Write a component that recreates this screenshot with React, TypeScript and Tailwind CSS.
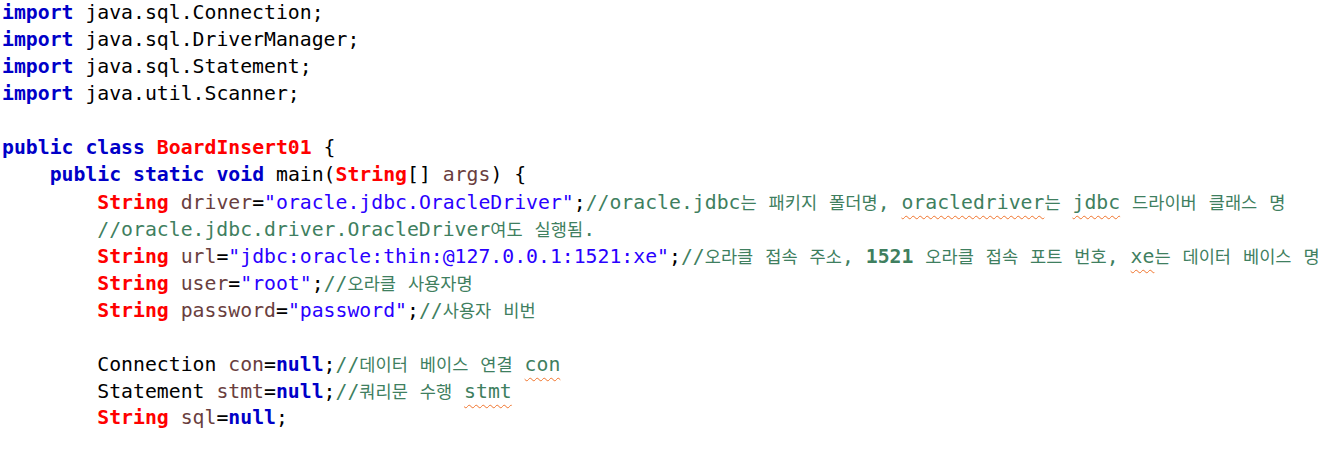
import { Fragment } from 'react';

type Kind = 'kw' | 'type' | 'str' | 'var' | 'cm' | 'cmb' | 'sq' | 'txt';
type Token = [Kind, string];

const COLORS: Record<Kind, string> = {
  kw: 'text-[#0000c8] font-bold',
  type: 'text-[#ff0000] font-bold',
  str: 'text-[#2a00ff]',
  var: 'text-[#6a3e3e]',
  cm: 'text-[#3f7f5f]',
  cmb: 'text-[#3f7f5f] font-bold',
  sq: 'text-[#3f7f5f] underline decoration-wavy decoration-[#f0742c] decoration-1 underline-offset-[6px]',
  txt: 'text-black',
};

const HANGUL = /([\uac00-\ud7a3]+)/;

// hangul falls back to a narrower font in the editor, so size it on its own
const Segment = ({ text }: { text: string }) => (
  <>
    {text.split(HANGUL).map((part, i) =>
      HANGUL.test(part) ? (
        <span key={i} className="text-[17.6px] font-normal" style={{ fontFamily: '"Noto Sans CJK KR", sans-serif' }}>
          {part}
        </span>
      ) : (
        <Fragment key={i}>{part}</Fragment>
      ),
    )}
  </>
);

const LINES: { indent: number; tokens: Token[] }[] = [
  { indent: 0, tokens: [['kw', 'import'], ['txt', ' java.sql.Connection;']] },
  { indent: 0, tokens: [['kw', 'import'], ['txt', ' java.sql.DriverManager;']] },
  { indent: 0, tokens: [['kw', 'import'], ['txt', ' java.sql.Statement;']] },
  { indent: 0, tokens: [['kw', 'import'], ['txt', ' java.util.Scanner;']] },
  { indent: 0, tokens: [] },
  { indent: 0, tokens: [['kw', 'public'], ['txt', ' '], ['kw', 'class'], ['txt', ' '], ['type', 'BoardInsert01'], ['txt', ' {']] },
  {
    indent: 1,
    tokens: [
      ['kw', 'public'],
      ['txt', ' '],
      ['kw', 'static'],
      ['txt', ' '],
      ['kw', 'void'],
      ['txt', ' main('],
      ['type', 'String'],
      ['txt', '[] '],
      ['var', 'args'],
      ['txt', ') {'],
    ],
  },
  {
    indent: 2,
    tokens: [
      ['type', 'String'],
      ['txt', ' '],
      ['var', 'driver'],
      ['txt', '='],
      ['str', '"oracle.jdbc.OracleDriver"'],
      ['txt', ';'],
      ['cm', '//oracle.jdbc는 패키지 폴더명, '],
      ['sq', 'oracledriver'],
      ['cm', '는 '],
      ['sq', 'jdbc'],
      ['cm', ' 드라이버 클래스 명'],
    ],
  },
  { indent: 2, tokens: [['cm', '//oracle.jdbc.driver.OracleDriver여도 실행됨.']] },
  {
    indent: 2,
    tokens: [
      ['type', 'String'],
      ['txt', ' '],
      ['var', 'url'],
      ['txt', '='],
      ['str', '"jdbc:oracle:thin:@127.0.0.1:1521:xe"'],
      ['txt', ';'],
      ['cm', '//오라클 접속 주소, '],
      ['cmb', '1521'],
      ['cm', ' 오라클 접속 포트 번호, '],
      ['sq', 'xe'],
      ['cm', '는 데이터 베이스 명'],
    ],
  },
  {
    indent: 2,
    tokens: [['type', 'String'], ['txt', ' '], ['var', 'user'], ['txt', '='], ['str', '"root"'], ['txt', ';'], ['cm', '//오라클 사용자명']],
  },
  {
    indent: 2,
    tokens: [['type', 'String'], ['txt', ' '], ['var', 'password'], ['txt', '='], ['str', '"password"'], ['txt', ';'], ['cm', '//사용자 비번']],
  },
  { indent: 0, tokens: [] },
  {
    indent: 2,
    tokens: [['txt', 'Connection '], ['var', 'con'], ['txt', '='], ['kw', 'null'], ['txt', ';'], ['cm', '//데이터 베이스 연결 '], ['sq', 'con']],
  },
  {
    indent: 2,
    tokens: [['txt', 'Statement '], ['var', 'stmt'], ['txt', '='], ['kw', 'null'], ['txt', ';'], ['cm', '//쿼리문 수행 '], ['sq', 'stmt']],
  },
  { indent: 2, tokens: [['type', 'String'], ['txt', ' '], ['var', 'sql'], ['txt', '='], ['kw', 'null'], ['txt', ';']] },
];

const App = () => {
  return (
    <main className="w-[1326px] h-[449px] bg-white overflow-hidden">
      <div
        className="flex flex-col pl-[2px] -mt-[1px] text-[19.8px] leading-[27px] whitespace-pre"
        style={{ fontFamily: '"DejaVu Sans Mono", "Noto Sans CJK KR", monospace' }}>
        {LINES.map((line, i) => (
          <div key={i} className="h-[27px]">
            {'    '.repeat(line.indent)}
            {line.tokens.map(([kind, text], j) => (
              <span key={j} className={COLORS[kind]}>
                <Segment text={text} />
              </span>
            ))}
          </div>
        ))}
      </div>
    </main>
  );
};

export default App;
